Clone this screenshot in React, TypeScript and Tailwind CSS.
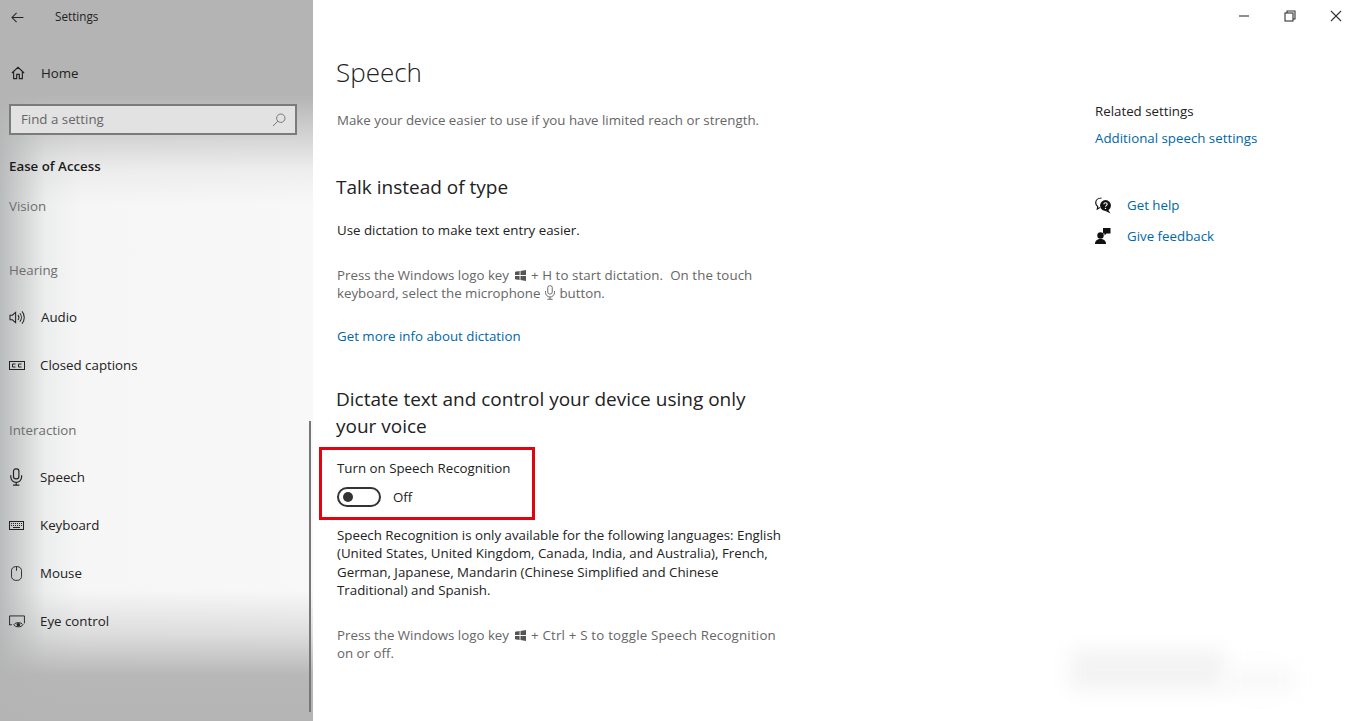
const ink = "#222";

function Win() {
  return (
    <svg viewBox="0 0 12 12" className="inline-block w-[11px] h-[11px] ml-[3px] mr-[1px] align-[-1px]" fill="#555">
      <path d="M0 2 5 1.2V5.5H0ZM6 1 12 0V5.5H6ZM0 6.5H5V10.8L0 10ZM6 6.5H12V12L6 11Z" />
    </svg>
  );
}

function Mic({ size = 18, color = ink }: { size?: number; color?: string }) {
  return (
    <svg viewBox="0 0 16 20" width={size * 0.8} height={size} fill="none" stroke={color} strokeWidth="1.3">
      <rect x="5" y="1" width="6" height="11" rx="2.5" />
      <path d="M2 8v2a6 6 0 0 0 12 0V8M8 16v3M4.5 19h7" />
    </svg>
  );
}

const icons: Record<string, React.ReactNode> = {
  home: (
    <svg viewBox="0 0 16 16" width="14" height="14" className="ml-[2px]" fill="none" stroke={ink} strokeWidth="1.3">
      <path d="M1 8 8 1.5 15 8M3 6.5V14.5H6.5V9.5H9.5V14.5H13V6.5" />
    </svg>
  ),
  audio: (
    <svg viewBox="0 0 18 16" width="17" height="15" fill="none" stroke={ink} strokeWidth="1.1">
      <path d="M1 5.5H3.5L7 2.5V13.5L3.5 10.5H1Z" />
      <path d="M9.5 5.5a4 4 0 0 1 0 5M11.5 3.5a7 7 0 0 1 0 9M13.8 1.5a10 10 0 0 1 0 13" />
    </svg>
  ),
  cc: (
    <svg viewBox="0 0 16 9" width="16" height="9" fill="none" stroke={ink} strokeWidth="1">
      <rect x="0.5" y="0.5" width="15" height="8" />
      <path d="M6.5 3H3.5V6H6.5M12.5 3H9.5V6H12.5" />
    </svg>
  ),
  mic: <Mic size={18} />,
  keyboard: (
    <svg viewBox="0 0 15 9" width="15" height="9" fill="none" stroke={ink} strokeWidth="1">
      <rect x="0.5" y="0.5" width="14" height="8" />
      <path d="M2 2.5H13M2 4.5H13" strokeDasharray="1 1" />
      <path d="M4 6.5H11" />
    </svg>
  ),
  mouse: (
    <svg viewBox="0 0 12 16" width="11" height="15" className="ml-[2px]" fill="none" stroke={ink} strokeWidth="1">
      <rect x="0.5" y="0.5" width="11" height="15" rx="4.5" />
      <path d="M6 0.5V5" />
    </svg>
  ),
  eye: (
    <svg viewBox="0 0 17 14" width="16" height="13" fill="none" stroke={ink} strokeWidth="1">
      <path d="M0.5 11V1H16.5V9" />
      <path d="M0.5 10.5H3" />
      <path d="M5 10.5C7 7.5 13 7.5 15 10.5 13 13.5 7 13.5 5 10.5Z" />
      <circle cx="10" cy="10.5" r="1.5" fill={ink} />
    </svg>
  ),
};

function NavItem({ icon, label, tight = true }: { icon: string; label: string; tight?: boolean }) {
  return (
    <div className="h-12 flex items-center pl-[9px] text-[13.3px] text-[#222]">
      <span className={(tight ? "w-[31px]" : "w-8") + " flex items-center shrink-0"}>{icons[icon]}</span>
      <span className="pt-[2px]">{label}</span>
    </div>
  );
}

function Group({ label }: { label: string }) {
  return <div className="h-10 flex items-center pl-[9px] pt-[2px] text-[13.3px] text-[#6e6e6e]">{label}</div>;
}

function Sidebar() {
  return (
    <aside className="relative w-[313px] h-[721px] shrink-0 overflow-hidden bg-[linear-gradient(to_bottom,rgba(180,180,180,1)_0px,rgba(180,180,180,1)_95px,rgba(180,180,180,0.55)_135px,rgba(180,180,180,0.15)_170px,rgba(180,180,180,0)_205px,rgba(180,180,180,0)_590px,rgba(180,180,180,0.4)_635px,rgba(180,180,180,0.95)_675px,rgba(180,180,180,1)_721px),linear-gradient(to_right,#b9bcbd_0px,#d2d4d4_22px,#eceded_45px,#f6f6f6_80px,#f8f8f8_313px)]">
      <div className="h-[34px] flex items-center pl-[11px] text-[#222]">
        <svg viewBox="0 0 14 12" width="13" height="11" fill="none" stroke={ink} strokeWidth="1.1">
          <path d="M13.5 6H1M6 1 1 6 6 11" />
        </svg>
        <span className="ml-[31px] text-[11.7px]">Settings</span>
      </div>
      <div className="mt-[15px]">
        <NavItem icon="home" label="Home" tight={false} />
      </div>
      <div className="mt-[7px] ml-[9px] w-[288px] h-[31px] border-2 border-[#7b7b7b] bg-[#e2e2e2] flex items-center justify-between pl-[10px] pr-[9px] text-[13.3px] text-[#666]">
        Find a setting
        <svg viewBox="0 0 14 14" width="14" height="14" fill="none" stroke="#777" strokeWidth="1">
          <circle cx="8.8" cy="5.2" r="4.2" />
          <path d="M5.8 8.2 1 13" />
        </svg>
      </div>
      <div className="mt-[11px] h-10 flex items-center pl-[9px] pt-[2px] text-[13.3px] font-semibold text-[#1a1a1a]">Ease of Access</div>
      <Group label="Vision" />
      <div className="mt-6">
        <Group label="Hearing" />
      </div>
      <div className="mt-[3px]">
        <NavItem icon="audio" label="Audio" tight={false} />
        <NavItem icon="cc" label="Closed captions" />
      </div>
      <div className="mt-[21px]">
        <Group label="Interaction" />
      </div>
      <div className="mt-[3px]">
        <NavItem icon="mic" label="Speech" />
        <NavItem icon="keyboard" label="Keyboard" />
        <NavItem icon="mouse" label="Mouse" />
        <NavItem icon="eye" label="Eye control" />
      </div>
      <div className="absolute left-[309px] top-[421px] w-[2px] h-[291px] bg-[#777]" />
    </aside>
  );
}

function Toggle() {
  return (
    <div className="flex items-center">
      <div className="w-[44px] h-[20px] rounded-full border-2 border-[#333] flex items-center pl-[4px]">
        <div className="w-[10px] h-[10px] rounded-full bg-[#333]" />
      </div>
      <span className="ml-3 pt-px text-[13.3px] text-[#222]">Off</span>
    </div>
  );
}

function Main() {
  return (
    <main className="w-[500px] shrink-0 pl-[24px] pt-[52px]">
      <h1 className="-ml-px text-[26px] leading-10 font-light text-[#222]">Speech</h1>
      <p className="mt-[18px] text-[13.3px] leading-5 text-[#666]">Make your device easier to use if you have limited reach or strength.</p>
      <h2 className="-ml-px mt-[43px] text-[19px] leading-7 text-[#222]">Talk instead of type</h2>
      <p className="mt-[19px] text-[13.3px] leading-5 text-[#222]">Use dictation to make text entry easier.</p>
      <p className="mt-[26px] text-[13.3px] leading-[18px] text-[#666] whitespace-nowrap">
        Press the Windows logo key <Win /> <span className="tracking-[0.08px]">+ H to start dictation.&nbsp; On the touch</span>
        <br />
        keyboard, select the microphone{" "}
        <span className="inline-block align-[-2px]">
          <Mic size={15} color="#666" />
        </span>{" "}
        button.
      </p>
      <a className="block mt-6 text-[13.3px] leading-5 text-[#0067a8]">Get more info about dictation</a>
      <h2 className="-ml-px mt-10 text-[19px] leading-[27px] text-[#222] whitespace-nowrap">
        Dictate text and control your device using only
        <br />
        your voice
      </h2>
      <div className="mt-[7px] -ml-[18px] w-[216px] h-[73px] border-[3px] border-[#e0040f] pl-[15px] pt-[8px]">
        <div className="text-[13.3px] leading-5 text-[#222] whitespace-nowrap">Turn on Speech Recognition</div>
        <div className="mt-[9px]">
          <Toggle />
        </div>
      </div>
      <p className="mt-[6px] text-[13.3px] leading-[18.33px] text-[#222] whitespace-nowrap">
        Speech Recognition is only available for the following languages: English
        <br />
        (United States, United Kingdom, Canada, India, and Australia), French,
        <br />
        German, Japanese, Mandarin (Chinese Simplified and Chinese
        <br />
        Traditional) and Spanish.
      </p>
      <p className="mt-[27px] text-[13.3px] leading-[18px] text-[#666] whitespace-nowrap">
        Press the Windows logo key <Win /> <span className="tracking-[0.2px]">+ Ctrl + S to toggle Speech Recognition</span>
        <br />
        on or off.
      </p>
    </main>
  );
}

function Right() {
  return (
    <section className="flex-1 flex flex-col">
      <div className="h-[32px] flex items-center justify-end pr-[14px] gap-[34px]">
        <svg viewBox="0 0 12 12" width="12" height="12" stroke="#333" strokeWidth="1.1" fill="none">
          <path d="M1 6H11" />
        </svg>
        <svg viewBox="0 0 12 12" width="12" height="12" stroke="#333" strokeWidth="1.1" fill="none">
          <rect x="1" y="3" width="8" height="8" />
          <path d="M3 3V1H11V9H9" />
        </svg>
        <svg viewBox="0 0 12 12" width="12" height="12" stroke="#333" strokeWidth="1.1" fill="none">
          <path d="M1 1 11 11M11 1 1 11" />
        </svg>
      </div>
      <div className="pl-[282px]">
        <div className="mt-[69px] text-[13.3px] leading-5 text-[#222]">Related settings</div>
        <a className="block mt-[7px] text-[13.3px] leading-5 text-[#0067a8]">Additional speech settings</a>
        <div className="mt-[47px] h-5 flex items-center text-[13.3px] text-[#0067a8]">
          <span className="w-8 flex items-center">
            <svg viewBox="0 0 17 17" width="17" height="17">
              <path d="M6.5 1C3 1 .7 3.2.7 5.8c0 1.6.8 2.9 2 3.7L2.3 12l2.6-1.6" fill="none" stroke="#111" strokeWidth="1.2" />
              <circle cx="10.5" cy="8.5" r="5.4" fill="#111" />
              <path d="M13 12.5 15.5 16.5 10.5 14Z" fill="#111" />
              <path d="M8.8 7.2c.2-2 3.4-2 3.4 0 0 1.2-1.7 1.2-1.7 2.6" fill="none" stroke="#fff" strokeWidth="1.1" />
              <circle cx="10.5" cy="11.4" r=".7" fill="#fff" />
            </svg>
          </span>
          <span className="pt-[2px]">Get help</span>
        </div>
        <div className="mt-[11px] h-5 flex items-center text-[13.3px] text-[#0067a8]">
          <span className="w-8 flex items-center">
            <svg viewBox="0 0 16 16" width="16" height="16" fill="#111">
              <circle cx="5.5" cy="7.5" r="3.2" />
              <path d="M0 16c0-3.2 2.3-5 5.5-5s5.5 1.8 5.5 5Z" />
              <path d="M8 0H15.5V5.5H11.5L9.5 7.5V5.5H8Z" />
            </svg>
          </span>
          <span className="pt-[2px]">Give feedback</span>
        </div>
      </div>
    </section>
  );
}

export default function App() {
  return (
    <div className="relative w-[1356px] h-[721px] overflow-hidden flex bg-white font-['Open_Sans','Noto_Sans',sans-serif]">
      <Sidebar />
      <Main />
      <Right />
      <div className="absolute left-[1070px] top-[650px] w-[155px] h-[40px] bg-[#f3f3f3] blur-[10px]" />
      <div className="absolute left-[1225px] top-[668px] w-[70px] h-[24px] bg-[#f8f8f8] blur-[10px]" />
    </div>
  );
}
